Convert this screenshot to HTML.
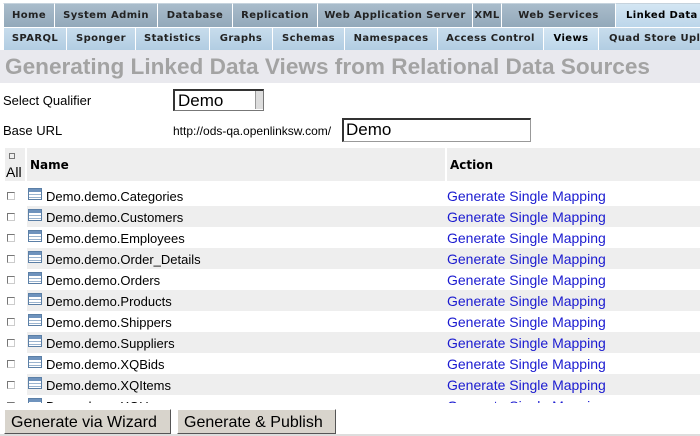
<!DOCTYPE html>
<html><head><style>
body{margin:0;width:700px;height:436px;overflow:hidden;background:#fff;font-family:"Liberation Sans",sans-serif;position:relative}
.t{position:absolute;box-sizing:border-box;font-family:"DejaVu Sans",sans-serif;font-weight:bold;font-size:10px;letter-spacing:0.4px;color:#222;text-align:center;border-left:1px solid #fff;white-space:nowrap;overflow:hidden}
.r1{top:3px;height:24px;line-height:24px;background:linear-gradient(#a9bccb,#93a9ba);border-top:1px solid #c6d3dd}
.r2{top:28px;height:22px;line-height:22px;background:linear-gradient(#c7dcec,#b2cde2)}
.act{background:linear-gradient(#d4e6f3,#bcd6ea)!important;color:#000}
#ttl{position:absolute;top:50px;left:0;width:700px;height:33px;background:#e9e9ee;color:#a3a3a3;font-weight:bold;font-size:22.6px;line-height:34px;padding-left:5px;box-sizing:border-box;white-space:nowrap}
.lb{position:absolute;font-size:13px;color:#000}
.row{position:absolute;left:0;width:700px;height:21px;font-size:13px}
.row.g .bg{position:absolute;left:27px;right:0;top:0;bottom:0;background:#eee}
.cb{position:absolute;left:7px;top:7px;width:6px;height:6px;border:1px solid #777;border-right-color:#ccc;border-bottom-color:#ccc;background:#fff}
.ic{position:absolute;left:28px;top:3px;width:14px;height:12px;border:1px solid #5b7fa6;background:repeating-linear-gradient(#fff 0 2px,#9bb4cf 2px 3px);box-sizing:border-box}
.ic:before{content:"";position:absolute;left:0;right:0;top:0;height:3px;background:#6f93bd}
.nm{position:absolute;left:46px;top:4px}
.ac{position:absolute;left:447px;top:3px;color:#1a1ad0;font-size:14px}
.btn{position:absolute;top:409px;height:25px;line-height:25px;background:#d8d4cc;border:1px solid #fff;border-right-color:#555;border-bottom-color:#555;font-size:16px;box-sizing:border-box;padding:0 6px}
</style></head><body>
<div class="t r1" style="left:3px;width:51px">Home</div>
<div class="t r1" style="left:54px;width:103px">System Admin</div>
<div class="t r1" style="left:157px;width:75px">Database</div>
<div class="t r1" style="left:232px;width:85px">Replication</div>
<div class="t r1" style="left:317px;width:155px">Web Application Server</div>
<div class="t r1" style="left:472px;width:29px">XML</div>
<div class="t r1" style="left:501px;width:114px">Web Services</div>
<div class="t r1 act" style="left:615px;width:85px;text-align:left;padding-left:10px">Linked Data</div>
<div class="t r2" style="left:3px;width:63px">SPARQL</div>
<div class="t r2" style="left:66px;width:69px">Sponger</div>
<div class="t r2" style="left:135px;width:74px">Statistics</div>
<div class="t r2" style="left:209px;width:63px">Graphs</div>
<div class="t r2" style="left:272px;width:72px">Schemas</div>
<div class="t r2" style="left:344px;width:93px">Namespaces</div>
<div class="t r2" style="left:437px;width:106px">Access Control</div>
<div class="t r2 act" style="left:543px;width:55px">Views</div>
<div class="t r2" style="left:598px;width:102px;text-align:left;padding-left:10px">Quad Store Upload</div>
<div id="ttl">Generating Linked Data Views from Relational Data Sources</div>
<div class="lb" style="left:3px;top:93px">Select Qualifier</div>
<div style="position:absolute;left:173px;top:89px;width:91px;height:22px;border:1px solid #777;border-left:2px solid #333;border-top:2px solid #333;box-sizing:border-box;font-size:17px;line-height:19px;padding-left:3px">Demo<span style="position:absolute;right:0;top:0;width:7px;height:18px;background:#ddd;border-left:1px solid #999"></span></div>
<div class="lb" style="left:3px;top:123px">Base URL</div>
<div class="lb" style="left:173px;top:124px;font-size:12px">http://ods-qa.openlinksw.com/</div>
<div style="position:absolute;left:342px;top:118px;width:189px;height:24px;border:1px solid #999;border-left:2px solid #333;border-top:2px solid #333;box-sizing:border-box;font-size:17px;line-height:20px;padding-left:2px">Demo</div>
<div style="position:absolute;top:148px;left:5px;width:20px;height:33px;background:#eee"></div>
<div style="position:absolute;top:148px;left:27px;width:418px;height:33px;background:#eee"></div>
<div style="position:absolute;top:148px;left:447px;width:253px;height:33px;background:#eee"></div>
<div style="position:absolute;left:9px;top:153px;width:4px;height:4px;border:1px solid #777"></div>
<div class="lb" style="left:6px;top:164px;font-size:14px">All</div>
<div class="lb" style="left:30px;top:158px;font-weight:bold;font-size:12px;font-family:'DejaVu Sans',sans-serif">Name</div>
<div class="lb" style="left:450px;top:158px;font-weight:bold;font-size:12px;font-family:'DejaVu Sans',sans-serif">Action</div>
<div style="position:absolute;top:185px;left:0;width:700px;height:218px;overflow:hidden">
<div class="row" style="top:0"><div class="cb"></div><div class="ic"></div><div class="nm">Demo.demo.Categories</div><div class="ac">Generate Single Mapping</div></div>
<div class="row g" style="top:21px"><div class="bg"></div><div class="cb"></div><div class="ic"></div><div class="nm">Demo.demo.Customers</div><div class="ac">Generate Single Mapping</div></div>
<div class="row" style="top:42px"><div class="cb"></div><div class="ic"></div><div class="nm">Demo.demo.Employees</div><div class="ac">Generate Single Mapping</div></div>
<div class="row g" style="top:63px"><div class="bg"></div><div class="cb"></div><div class="ic"></div><div class="nm">Demo.demo.Order_Details</div><div class="ac">Generate Single Mapping</div></div>
<div class="row" style="top:84px"><div class="cb"></div><div class="ic"></div><div class="nm">Demo.demo.Orders</div><div class="ac">Generate Single Mapping</div></div>
<div class="row g" style="top:105px"><div class="bg"></div><div class="cb"></div><div class="ic"></div><div class="nm">Demo.demo.Products</div><div class="ac">Generate Single Mapping</div></div>
<div class="row" style="top:126px"><div class="cb"></div><div class="ic"></div><div class="nm">Demo.demo.Shippers</div><div class="ac">Generate Single Mapping</div></div>
<div class="row g" style="top:147px"><div class="bg"></div><div class="cb"></div><div class="ic"></div><div class="nm">Demo.demo.Suppliers</div><div class="ac">Generate Single Mapping</div></div>
<div class="row" style="top:168px"><div class="cb"></div><div class="ic"></div><div class="nm">Demo.demo.XQBids</div><div class="ac">Generate Single Mapping</div></div>
<div class="row g" style="top:189px"><div class="bg"></div><div class="cb"></div><div class="ic"></div><div class="nm">Demo.demo.XQItems</div><div class="ac">Generate Single Mapping</div></div>
<div class="row" style="top:210px"><div class="cb"></div><div class="ic"></div><div class="nm">Demo.demo.XQUsers</div><div class="ac">Generate Single Mapping</div></div>
</div>
<div class="btn" style="left:4px;width:167px">Generate via Wizard</div>
<div class="btn" style="left:177px;width:159px">Generate &amp; Publish</div>
<div style="position:absolute;left:0;top:434px;width:700px;height:2px;background:#ddd"></div>
</body></html>
